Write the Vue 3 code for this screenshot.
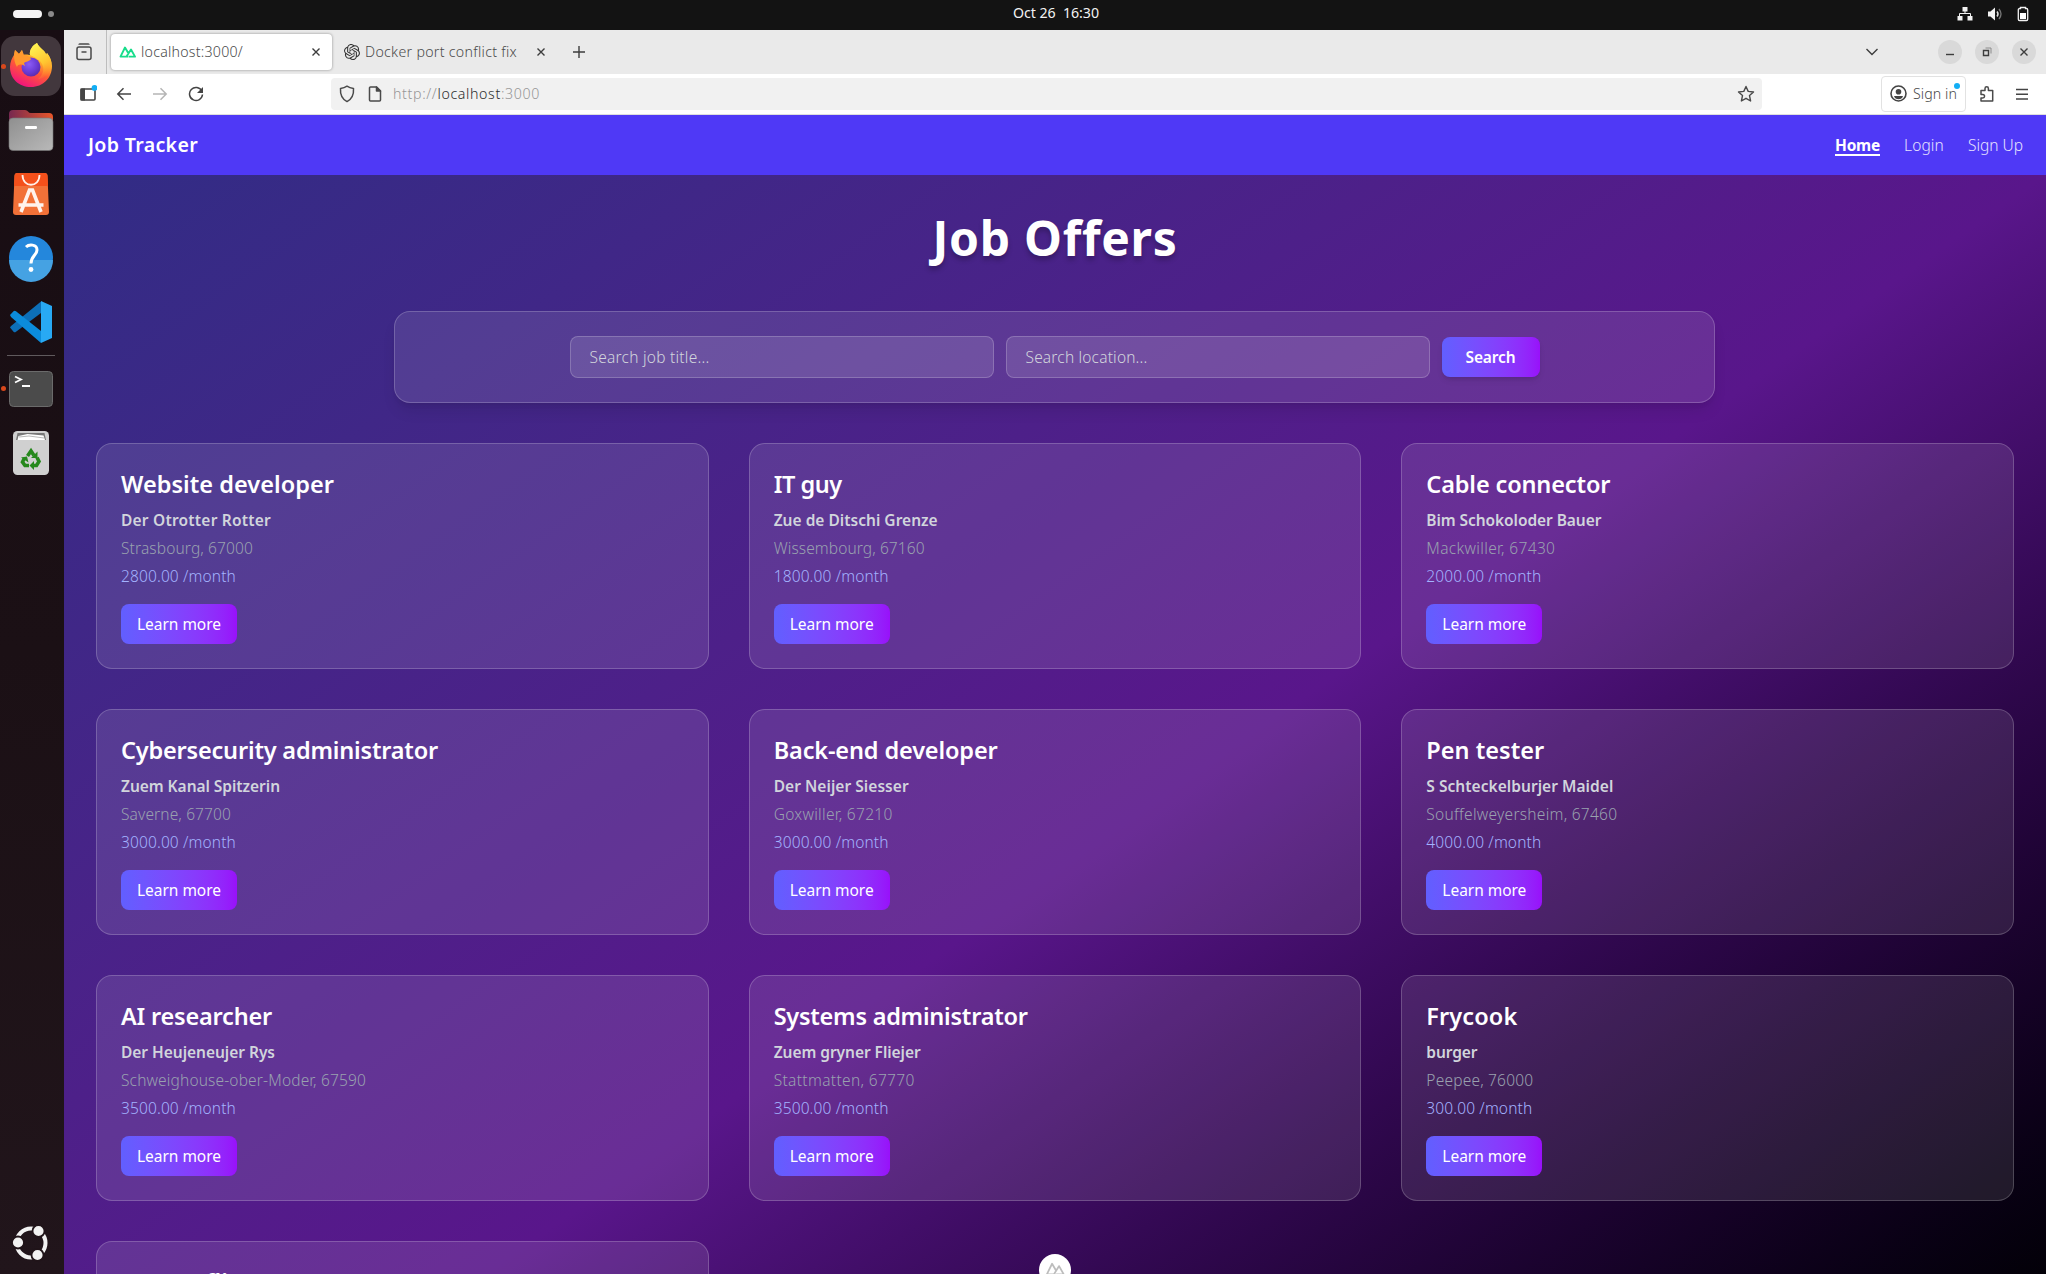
<script setup>
// Adjusts tracking so that a label takes the given width in pixels.
const applyFit = (el, { value }) => {
  if (!value) return
  el.style.letterSpacing = '0px'
  const natural = el.getBoundingClientRect().width
  el.style.letterSpacing = `${(value - natural) / el.textContent.length}px`
}
const vFit = { mounted: applyFit }

const jobs = [
  { title: 'Website developer', company: 'Der Otrotter Rotter', place: 'Strasbourg, 67000', pay: '2800.00 /month', w: [213, 150, 132, 115] },
  { title: 'IT guy', company: 'Zue de Ditschi Grenze', place: 'Wissembourg, 67160', pay: '1800.00 /month', w: [68, 164, 151, 115] },
  { title: 'Cable connector', company: 'Bim Schokoloder Bauer', place: 'Mackwiller, 67430', pay: '2000.00 /month', w: [184, 175, 129, 115] },
  { title: 'Cybersecurity administrator', company: 'Zuem Kanal Spitzerin', place: 'Saverne, 67700', pay: '3000.00 /month', w: [317, 159, 110, 115] },
  { title: 'Back-end developer', company: 'Der Neijer Siesser', place: 'Goxwiller, 67210', pay: '3000.00 /month', w: [224, 135, 119, 115] },
  { title: 'Pen tester', company: 'S Schteckelburjer Maidel', place: 'Souffelweyersheim, 67460', pay: '4000.00 /month', w: [118, 187, 191, 115] },
  { title: 'AI researcher', company: 'Der Heujeneujer Rys', place: 'Schweighouse-ober-Moder, 67590', pay: '3500.00 /month', w: [151, 154, 245, 115] },
  { title: 'Systems administrator', company: 'Zuem gryner Fliejer', place: 'Stattmatten, 67770', pay: '3500.00 /month', w: [254, 147, 141, 115] },
  { title: 'Frycook', company: 'burger', place: 'Peepee, 76000', pay: '300.00 /month', w: [91, 51, 107, 106] },
  { title: 'Burger flipper', w: [160] },
]
</script>

<template>
  <div class="desktop">
    <header class="topbar">
      <div class="spaces"><span class="pill"></span><span class="spot"></span></div>
      <div class="clock"><span v-fit="86">Oct 26&nbsp; 16:30</span></div>
      <div class="status">
        <svg width="16" height="14" viewBox="0 0 16 14"><path fill="#f2f2f2" d="M5.500 0h5v4.500h-2V6H13a1 1 0 0 1 1 1v2h1.500v4.500h-5V9H13V7H3v2h2.500v4.500h-5V9H2V7a1 1 0 0 1 1-1h4.500V4.500h-2z" /></svg>
        <svg width="16" height="14" viewBox="0 0 16 14"><path fill="#f2f2f2" d="M1 4.500h2.500L8 .5v13L3.500 9.500H1z" /><path d="M10 4.500q2 2.500 0 5" fill="none" stroke="#ddd" stroke-width="1.500" /><path d="M12 2q4 5 0 10" fill="none" stroke="#777" stroke-width="1.300" /></svg>
        <svg width="12" height="16" viewBox="0 0 12 16"><path d="M3.500 1.500h5V2.500h1a1.200 1.200 0 0 1 1.200 1.200v9.600a1.200 1.200 0 0 1-1.200 1.200h-7a1.200 1.200 0 0 1-1.200-1.200V3.700a1.200 1.200 0 0 1 1.200-1.200h1z" fill="none" stroke="#f2f2f2" stroke-width="1.300" /><path fill="#fff" d="M3 7h6v6H3z" /></svg>
      </div>
    </header>

    <div class="workspace">
      <aside class="dock">
        <div class="slot active running">
          <svg viewBox="0 0 64 64">
            <defs>
              <linearGradient id="fx" x1=".8" y1=".05" x2=".35" y2="1"><stop offset="0" stop-color="#fff14a" /><stop offset=".35" stop-color="#ffb02a" /><stop offset=".6" stop-color="#ff5a36" /><stop offset="1" stop-color="#f0147d" /></linearGradient>
              <linearGradient id="fy" x1=".3" y1="0" x2=".7" y2="1"><stop offset="0" stop-color="#fff352" /><stop offset=".6" stop-color="#ffc530" /><stop offset="1" stop-color="#ff8a2a" stop-opacity="0" /></linearGradient>
              <radialGradient id="fz" cx=".4" cy=".35" r=".7"><stop offset="0" stop-color="#8c5cf5" /><stop offset=".6" stop-color="#6a3bd6" /><stop offset="1" stop-color="#5b2aa8" /></radialGradient>
            </defs>
            <path fill="url(#fx)" d="M37 9c1 3 4 5 7 8 1 1 2 3 2 4l1-2c3 4 5 8 5 13 0 12-9 21-21 21S10 45 10 33c0-5 2-9 4-12l1-5 4 4 3-4 1 5c3-1 6 0 7 0-1-5 3-10 7-12z" />
            <circle cx="31" cy="33" r="9.500" fill="url(#fz)" />
            <path fill="url(#fy)" d="M37 9c1 3 4 5 7 8 1 1 2 3 2 4l1-2c3 4 5 8 4 14-1 7-7 12-13 12 5-4 7-10 4-15-2-4-6-6-12-9-1-5 3-10 7-12z" />
            <path fill="#ff9a2e" d="M15 16l4 4 3-4 2 5c3 0 5 1 7 4-2 3-5 2-7 4l1 3c-4-2-7-2-8 1-2-3-3-7-3-12z" />
          </svg>
        </div>
        <div class="slot">
          <svg viewBox="0 0 64 64">
            <defs>
              <linearGradient id="fd"><stop offset="0" stop-color="#762850" /><stop offset="1" stop-color="#e8562a" /></linearGradient>
              <linearGradient id="fg" x1="0" y1="0" x2="1" y2="1"><stop offset="0" stop-color="#8f8f8f" /><stop offset="1" stop-color="#b9b9b9" /></linearGradient>
            </defs>
            <path fill="url(#fd)" d="M9 16a4 4 0 0 1 4-4h12q2 0 3 1.500T31 15h18a4 4 0 0 1 4 4v10H9z" />
            <rect x="9" y="20" width="44" height="32.500" rx="4" fill="url(#fg)" stroke="#777" stroke-width=".6" />
            <rect x="25" y="28" width="12" height="3" rx="1.200" fill="#fff" />
          </svg>
        </div>
        <div class="slot">
          <svg viewBox="0 0 64 64">
            <path fill="#f27138" d="M14.500 14a3 3 0 0 1 3-3h27a3 3 0 0 1 3 3L49 50a3 3 0 0 1-3 3H16a3 3 0 0 1-3-3z" />
            <path fill="#f4501b" d="M14.500 14a3 3 0 0 1 3-3h27a3 3 0 0 1 3 3l.5 10h-34z" />
            <path d="M22.500 13c0 13 17 13 17 0" fill="none" stroke="#fff0e8" stroke-width="1.800" />
            <path d="M21 50l8.500-22h3L41 50M18.500 43h25" fill="none" stroke="#fff3ed" stroke-width="3.600" />
          </svg>
        </div>
        <div class="slot">
          <svg viewBox="0 0 64 64">
            <circle cx="31" cy="32" r="22" fill="#2487dc" /><path fill="#45a2e3" d="M9 34h44a22 22 0 0 1-44 0z" />
            <path d="M26 21c3-3 11-3 11 3 0 5-6 6-6 13.500" fill="none" stroke="#fff" stroke-width="3" /><circle cx="31" cy="43.500" r="2.400" fill="#fff" />
          </svg>
        </div>
        <div class="slot">
          <svg viewBox="0 0 64 64">
            <path fill="#0d6fb8" d="M10 37.500l3.500 4.200q1.200 1 2.500 0L41 23V11.500L11 36z" />
            <path fill="#0b8cdc" d="M10 25l3.500-3.700q1.200-1 2.500 0L41 41v12L11 27z" />
            <path fill="#28a9f4" d="M41 11l11 5v32l-11 5z" />
          </svg>
        </div>
        <div class="rule"></div>
        <div class="slot running">
          <svg viewBox="0 0 64 64">
            <rect x="9.500" y="15.500" width="43" height="35" rx="4" fill="#4b4b4b" stroke="#6b6b6b" />
            <path d="M15 20.500l6 3-6 3M22 30h8" fill="none" stroke="#fff" stroke-width="1.800" />
          </svg>
        </div>
        <div class="slot">
          <svg viewBox="0 0 64 64">
            <rect x="13" y="11" width="36" height="44" rx="4.500" fill="#d0d0d0" />
            <path fill="#777" d="M16 20l1.500-7h27l1.500 7z" /><path fill="#fff" d="M17.500 20l1-4 9-2 16 1.500 1.500 4.500z" /><path d="M19 17l10-1 15 2" fill="none" stroke="#999" stroke-width=".7" />
            <g fill="none" stroke="#25881c" stroke-width="3.600">
              <path d="M27.500 36l3.500-5 3 4.500" /><path d="M37 37.500l2 4-2.500 4h-4.500" /><path d="M29 45.500h-4l-2.500-3.500 2-4" />
            </g>
            <path fill="#25881c" d="M31 38h6.500V31.500zM34 41v9l-4.500-4.500zM21 37.500l6-1 1.500 6z" />
          </svg>
        </div>
        <div class="slot launcher">
          <svg viewBox="0 0 64 64">
            <circle cx="31" cy="33" r="14.500" fill="none" stroke="#f2f2f2" stroke-width="4" />
            <g fill="#f2f2f2" stroke="#201419" stroke-width="1.800"><circle cx="38.500" cy="21" r="6" /><circle cx="18" cy="32.500" r="6" /><circle cx="37.500" cy="45" r="6" /></g>
          </svg>
        </div>
      </aside>

      <section class="browser">
        <div class="tabs">
          <div class="archive">
            <svg width="16" height="18" viewBox="0 0 16 18" fill="none" stroke="#4a4a4a" stroke-width="1.500"><path d="M3 1.800q0-.8.800-.8h8.400q.8 0 .8.800" /><rect x="1" y="4" width="14" height="12.500" rx="2" /><path d="M5.500 9h5" /></svg>
          </div>
          <div class="tab current">
            <svg width="17" height="12" viewBox="0 0 17 12" fill="none" stroke="#18dd8b" stroke-width="1.900" stroke-linejoin="round"><path d="M9 10.600H1.500L6 1.500l3.500 6M7.500 10.600L12 3.500l4 7.100H9.500" /></svg>
            <span v-fit="102" class="label">localhost:3000/</span>
            <svg class="x" width="10" height="10" viewBox="0 0 10 10"><path d="M1.500 1.500l7 7M8.500 1.500l-7 7" /></svg>
          </div>
          <div class="tab other">
            <svg width="16" height="16" viewBox="0 0 24 24"><path fill="#333" d="M22.280 9.820a5.980 5.980 0 0 0-.52-4.910 6.050 6.050 0 0 0-6.510-2.900A6.070 6.070 0 0 0 4.980 4.180a5.980 5.980 0 0 0-4 2.900 6.050 6.050 0 0 0 .75 7.100 5.980 5.980 0 0 0 .51 4.910 6.050 6.050 0 0 0 6.510 2.900A5.980 5.980 0 0 0 13.260 24a6.060 6.060 0 0 0 5.770-4.210 5.990 5.990 0 0 0 4-2.900 6.060 6.060 0 0 0-.75-7.070zm-9.020 12.610a4.480 4.480 0 0 1-2.880-1.040l.14-.08 4.780-2.760a.8.8 0 0 0 .39-.68v-6.740l2.020 1.170.04.06v5.580a4.500 4.500 0 0 1-4.490 4.490zM3.600 18.300a4.470 4.470 0 0 1-.53-3.010l.14.090 4.780 2.760a.77.77 0 0 0 .78 0l5.840-3.370v2.330l-.03.06-4.830 2.790a4.500 4.500 0 0 1-6.150-1.650zM2.340 7.900a4.490 4.490 0 0 1 2.370-1.970V11.600a.77.77 0 0 0 .39.68l5.810 3.350-2.020 1.170h-.07L4 14.010A4.500 4.500 0 0 1 2.340 7.870zm16.600 3.860l-5.840-3.390 2.020-1.160h.07l4.830 2.790a4.490 4.490 0 0 1-.68 8.100v-5.680a.79.79 0 0 0-.4-.66zm2-3.020l-.14-.09-4.770-2.780a.78.78 0 0 0-.79 0L9.410 9.230V6.900l.03-.06 4.830-2.790a4.500 4.500 0 0 1 6.680 4.660zM8.300 12.860l-2.020-1.160-.04-.06V6.070a4.500 4.500 0 0 1 7.380-3.450l-.14.08-4.780 2.760a.8.8 0 0 0-.39.68zm1.100-2.370l2.600-1.500 2.610 1.500v3l-2.600 1.500-2.610-1.500z" /></svg>
            <span v-fit="152" class="label">Docker port conflict fix</span>
            <svg class="x" width="10" height="10" viewBox="0 0 10 10"><path d="M1.500 1.500l7 7M8.500 1.500l-7 7" /></svg>
          </div>
          <svg class="plus" width="14" height="14" viewBox="0 0 14 14"><path d="M7 1v12M1 7h12" /></svg>
          <div class="window">
            <svg class="chev" width="14" height="10" viewBox="0 0 14 10"><path d="M1.500 2L7 7.500 12.500 2" /></svg>
            <i><svg width="10" height="10" viewBox="0 0 10 10"><path d="M1 7.500h8" /></svg></i>
            <i><svg width="10" height="10" viewBox="0 0 10 10"><path d="M1.500 3.500h5v5h-5z" /><path class="faint" d="M3.500 1h5.500v5.500" /></svg></i>
            <i><svg width="10" height="10" viewBox="0 0 10 10"><path d="M1.500 1.500l7 7M8.500 1.500l-7 7" /></svg></i>
          </div>
        </div>

        <div class="toolbar">
          <div class="tools">
            <svg width="18" height="18" viewBox="0 0 18 18"><rect x="2" y="4" width="14" height="11" rx="1" fill="none" stroke="#444" stroke-width="1.600" /><path fill="#444" d="M1.500 3.500H6v12H1.500z" /><circle cx="15.500" cy="2.900" r="2.900" fill="#12aef5" /></svg>
            <svg width="16" height="16" viewBox="0 0 16 16" fill="none" stroke="#444" stroke-width="1.500"><path d="M15 8H1.800M7.500 2.300L1.800 8l5.700 5.700" /></svg>
            <svg width="16" height="16" viewBox="0 0 16 16" fill="none" stroke="#b5b5b5" stroke-width="1.500"><path d="M1 8h13.200M8.500 2.300L14.200 8l-5.700 5.700" /></svg>
            <svg width="16" height="16" viewBox="0 0 16 16"><path d="M13.800 5A6.500 6.500 0 1 0 14.500 8.500" fill="none" stroke="#444" stroke-width="1.500" /><path fill="#444" d="M15 1v6H9z" /></svg>
          </div>
          <div class="address">
            <svg width="16" height="18" viewBox="0 0 16 18" fill="none" stroke="#4a4a4a" stroke-width="1.500" stroke-linejoin="round"><path d="M8 1.200c1.800 1.300 3.800 2 6.500 2.200.4 5.600-1.200 10.500-6.500 13.200C2.700 13.900 1.100 9 1.500 3.400 4.200 3.200 6.200 2.500 8 1.200z" /></svg>
            <svg width="14" height="16" viewBox="0 0 14 16" fill="none" stroke="#4a4a4a" stroke-width="1.500" stroke-linejoin="round"><path d="M2.500 1h6L12.500 5v9a1 1 0 0 1-1 1h-9a1 1 0 0 1-1-1V2a1 1 0 0 1 1-1z" /><path fill="#4a4a4a" d="M8.500 1v4h4z" /></svg>
            <span v-fit="147" class="url">http://<b>localhost</b>:3000</span>
            <svg class="star" width="18" height="18" viewBox="0 0 18 18" fill="none" stroke="#4a4a4a" stroke-width="1.400" stroke-linejoin="round"><path d="M9 1.500l2.200 4.900 5.300.6-4 3.600 1.100 5.400L9 13.300 4.400 16l1.100-5.400-4-3.600 5.300-.6z" /></svg>
          </div>
          <div class="account">
            <svg width="17" height="17" viewBox="0 0 17 17"><circle cx="8.500" cy="8.500" r="7.500" fill="none" stroke="#444" stroke-width="1.600" /><circle cx="8.500" cy="6.700" r="2.800" fill="#444" /><path fill="#444" d="M4 11h9q-1 3.200-4.500 3.200T4 11z" /></svg>
            <span v-fit="44">Sign in</span><em></em>
          </div>
          <svg width="16" height="18" viewBox="0 0 16 18" fill="none" stroke="#4a4a4a" stroke-width="1.500" stroke-linejoin="round"><path d="M2 5.500h4V3.500a1.700 1.700 0 0 1 3.400 0v2h4.300V16H2v-3h1.800a1.700 1.700 0 0 0 0-3.500H2z" /></svg>
          <svg width="14" height="14" viewBox="0 0 14 14" stroke="#444" stroke-width="1.400"><path d="M1 2.500h12M1 7.200h12M1 12h12" /></svg>
        </div>

        <div class="page">
          <nav>
            <span class="brand"><span v-fit="110">Job Tracker</span></span>
            <a class="on"><span v-fit="45">Home</span></a>
            <a><span v-fit="40">Login</span></a>
            <a><span v-fit="55">Sign Up</span></a>
          </nav>
          <main>
            <h1><span v-fit="245">Job Offers</span></h1>
            <div class="search">
              <div class="field"><span v-fit="120">Search job title...</span></div>
              <div class="field"><span v-fit="122">Search location...</span></div>
              <button class="go"><span v-fit="50">Search</span></button>
            </div>
            <div class="grid">
              <article v-for="job in jobs" :key="job.title">
                <h2><span v-fit="job.w[0]">{{ job.title }}</span></h2>
                <template v-if="job.company">
                  <p class="company"><span v-fit="job.w[1]">{{ job.company }}</span></p>
                  <p class="place"><span v-fit="job.w[2]">{{ job.place }}</span></p>
                  <p class="pay"><span v-fit="job.w[3]">{{ job.pay }}</span></p>
                  <button><span v-fit="84">Learn more</span></button>
                </template>
              </article>
            </div>
          </main>
        </div>
        <div class="devtools">
          <svg width="20" height="14" viewBox="0 0 17 12" fill="none" stroke="#bdbdbd" stroke-width="1.500" stroke-linejoin="round"><path d="M9 10.600H1.500L6 1.500l3.500 6M7.500 10.600L12 3.500l4 7.100H9.500" /></svg>
        </div>
      </section>
    </div>
  </div>
</template>

<style>
body { margin: 0; overflow: hidden; background: #000; }
</style>

<style scoped>
* { box-sizing: border-box; }
svg { display: block; flex: none; }
span { white-space: nowrap; }
h1, h2, p { margin: 0; }
h1 span, h2 span, p span, a span, button span, .brand span, .clock span, .field span, .label, .url, .account span { display: inline-block; }
.desktop { width: 2046px; height: 1274px; overflow: hidden; display: flex; flex-direction: column; font-family: "Noto Sans", "Open Sans", sans-serif; font-size: 15.500px; font-weight: 350; }
.topbar { height: 30px; flex: none; background: #131313; color: #f2f2f2; display: grid; grid-template-columns: 1fr auto 1fr; align-items: center; padding: 0 17px 2px 13px; font-size: 14.200px; }
.spaces { display: flex; align-items: center; gap: 6px; }
.pill { width: 29px; height: 8px; border-radius: 4px; background: #f5f5f5; }
.spot { width: 6px; height: 6px; border-radius: 50%; background: #8a8a8a; }
.clock { line-height: 20px; margin: 0 0 2px 70px; font-weight: 450; }
.status { display: flex; justify-content: flex-end; align-items: center; gap: 14px; }
.workspace { flex: 1; min-height: 0; display: flex; }
.dock { width: 64px; flex: none; padding-top: 4px; display: flex; flex-direction: column; background: linear-gradient(#180d13, #1b1015 50%, #21151b); }
.slot { position: relative; height: 64px; flex: none; }
.slot svg { position: relative; width: 64px; height: 64px; }
.slot.active::before { content: ""; position: absolute; left: 1px; top: 2px; width: 60px; height: 60px; border-radius: 14px; background: #42373d; }
.slot.running::after { content: ""; position: absolute; left: 1px; top: 29.500px; width: 5px; height: 5px; border-radius: 50%; background: #d9481c; }
.rule { height: 1px; margin: 1px 9px 0 7px; background: #605a5d; flex: none; }
.launcher { margin-top: auto; }
.browser { flex: 1; min-width: 0; display: flex; flex-direction: column; position: relative; overflow: hidden; }
.tabs { height: 44px; flex: none; background: #eaeaea; display: flex; align-items: center; font-size: 14.200px; color: #4a4a4a; }
.tabs path { fill: none; }
.tab.other > svg:first-child path { fill: #333; }
.archive { width: 43px; height: 100%; padding-left: 12px; display: flex; align-items: center; border-right: 1px solid #bdbdbd; }
.tab { display: flex; align-items: center; height: 36px; }
.label, .url, .account span { margin-bottom: 1px; }
.current { margin-left: 4px; width: 221px; padding: 0 11px 0 8px; background: #fff; border-radius: 4px; box-shadow: 0 0 3px #0006; }
.current .label { margin-left: 5px; }
.other { margin-left: 12px; width: 202px; }
.other .label { margin-left: 5px; }
.x { margin-left: auto; }
.x path, .plus path, .window path { stroke: #3d3d3d; stroke-width: 1.400; }
.window path.faint { stroke: #8c8c8c; stroke-width: 1; }
.plus { margin-left: 26px; }
.window { margin-left: auto; display: flex; align-items: center; gap: 13px; padding-right: 10px; }
.chev { margin-right: 46px; }
.window i { width: 24px; height: 24px; border-radius: 50%; background: #d9d9d9; display: flex; align-items: center; justify-content: center; }
.toolbar { height: 41px; flex: none; background: #fff; border-bottom: 1px solid #dedede; display: flex; align-items: center; padding: 0 17px 1px 0; color: #4a4a4a; font-size: 14.200px; }
.tools { width: 267px; padding-left: 15px; display: flex; align-items: center; gap: 20px; }
.tools svg:first-child { margin-right: -1px; }
.address { width: 1431px; height: 32px; border-radius: 4px; background: #f1f1f1; display: flex; align-items: center; padding: 0 7px 0 8px; }
.address svg:nth-child(2) { margin-left: 13px; }
.url { margin-left: 11px; color: #969696; }
.url b { font-weight: 350; color: #2c2c2c; }
.star { margin-left: auto; }
.account { position: relative; width: 85px; height: 36px; margin: 0 13px 0 119px; padding-left: 8px; border: 1px solid #e2e2e2; border-radius: 4px; display: flex; align-items: center; gap: 6px; }
.account em { position: absolute; left: 72px; top: 6px; width: 6px; height: 6px; border-radius: 50%; background: #12aef5; }
.account + svg { margin-right: 20px; }
.page { flex: none; color: #fff; }
nav { height: 60px; background: #4f39f6; display: flex; align-items: center; gap: 24px; padding: 0 23px 0 24px; }
.brand { margin: -2px auto 0 0; font-size: 19.600px; font-weight: 600; }
nav a { color: #e6e2ff; line-height: 24px; }
nav a.on { color: #fff; font-weight: 700; }
nav a.on span { text-decoration: underline; text-decoration-thickness: 2px; text-underline-offset: 3px; }
main { padding: 39px 32px 104px; background: linear-gradient(to bottom right in oklab, #312c85, #59168b, #000); }
h1 { font-size: 48px; line-height: 48px; font-weight: 700; text-align: center; text-shadow: 0 4px 5px #0000003d; }
.search { width: 1321px; height: 92px; margin: 49px 0 40px 298px; display: flex; align-items: center; justify-content: center; gap: 12px; background: #ffffff1a; border: 1px solid #ffffff33; border-radius: 16px; box-shadow: 0 10px 15px -3px #0000001a, 0 4px 6px -4px #0000001a; }
.field { width: 424px; height: 42px; padding: 0 19px; line-height: 40px; border: 1px solid #ffffff33; border-radius: 8px; background: #ffffff1f; color: #d1d5dc; }
button { display: block; height: 40px; border: 0; padding: 0 16px; border-radius: 8px; font: inherit; font-weight: 450; color: #fff; line-height: 40px; background: linear-gradient(to right in oklab, #615fff, #9810fa); }
button.go { padding: 0 24px; font-weight: 600; box-shadow: 0 4px 6px -1px #0000001a, 0 2px 4px -2px #0000001a; }
.grid { display: grid; grid-template-columns: repeat(3, 1fr); gap: 40px; }
article { height: 226px; padding: 24px; background: #ffffff1a; border: 1px solid #ffffff33; border-radius: 16px; }
h2 { font-size: 23.500px; line-height: 32px; margin-bottom: 8px; font-weight: 600; }
p { line-height: 24px; height: 24px; margin-bottom: 4px; }
.company { color: #d1d5dc; font-weight: 600; }
.place { color: #99a1af; }
.pay { color: #a3b3ff; margin-bottom: 16px; }
.devtools { position: absolute; left: 975px; top: 1224px; width: 32px; height: 32px; border-radius: 50%; background: #fff; display: flex; justify-content: center; padding-top: 8px; }
</style>
